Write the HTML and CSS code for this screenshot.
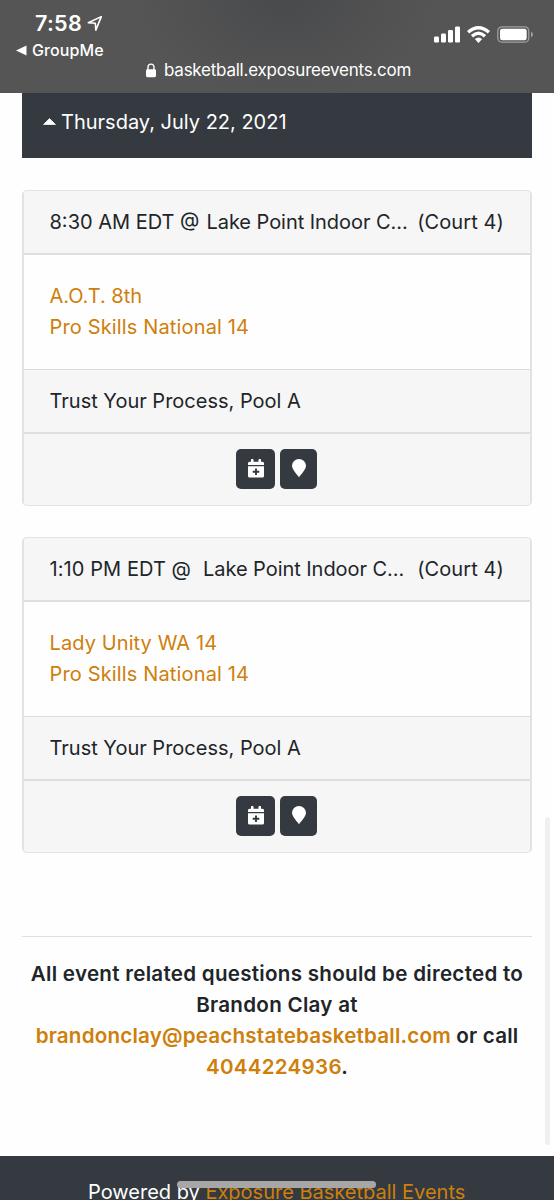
FILE: index.html
```html
<!DOCTYPE html>
<html lang="en">
<head>
<meta charset="utf-8">
<title>Schedule</title>
<link rel="stylesheet" href="styles.css">
</head>
<body>
<div class="screen">
  <header class="browser-bar">
    <div class="status">
      <div class="status-left">
        <div class="clock"><span class="time">7:58</span>
          <svg class="location" width="16" height="17" viewBox="0 0 16 17"><path d="M1.3 7.7 14.3 1.6 8.8 15.1 8.3 8.2Z" fill="none" stroke="#fff" stroke-width="1.6" stroke-linejoin="round"/></svg>
        </div>
        <div class="back"><svg width="11" height="11" viewBox="0 0 11 11"><path d="M0 5.5 10.5 0.5V10.5Z" fill="#fff"/></svg><span class="back-text">GroupMe</span></div>
      </div>
      <div class="status-right">
        <svg width="26" height="17" viewBox="0 0 26 17" fill="#fff"><rect x="0" y="10.5" width="5" height="6" rx="1.2"/><rect x="7" y="7.5" width="5" height="9" rx="1.2"/><rect x="14" y="4" width="5" height="12.5" rx="1.2"/><rect x="21" y="0.5" width="5" height="16" rx="1.2"/></svg>
        <svg class="wifi" width="23" height="17" viewBox="0 0 24 17" preserveAspectRatio="none"><path d="M0 5Q12-5 24 5L21.700 7.600Q12-.8 2.300 7.600Z M4 9Q12 2 20 9L17.600 11.500Q12 6.600 6.400 11.500Z M8.200 13Q12 9.900 15.800 13L12 17Z" fill="#fff"/></svg>
        <svg class="battery" width="37" height="17" viewBox="0 0 37 17"><rect x=".8" y=".8" width="31" height="15.4" rx="4.3" fill="none" stroke="#a0a0a0" stroke-width="1.3"/><rect x="3" y="2.700" width="26.7" height="11.600" rx="2.2" fill="#fff"/><path d="M34 5.7Q36 6.5 36 8.5T34 11.3Z" fill="#a0a0a0"/></svg>
      </div>
    </div>
    <div class="address"><svg width="10" height="15" viewBox="0 0 10 15"><path d="M2 7V4.2a3 3.1 0 0 1 6 0V7" fill="none" stroke="#fff" stroke-width="1.4"/><rect x="0" y="6.2" width="10" height="8" rx="1.4" fill="#fff"/></svg><span class="host">basketball.exposureevents.com</span></div>
  </header>

  <main class="content">
    <h2 class="day"><svg width="13" height="7" viewBox="0 0 13 7"><path d="M.5 6.5 6.5 .5 12.5 6.5Z" fill="#fff" stroke="#fff" stroke-width=".7" stroke-linejoin="round"/></svg><span class="day-text">Thursday, July 22, 2021</span></h2>

    <section class="card">
      <div class="card-row game"><span class="when">8:30 AM EDT @</span><span class="place place-first">Lake Point Indoor C...</span><span class="court">(Court 4)</span></div>
      <div class="teams"><a class="aot">A.O.T. 8th</a><a class="pro">Pro Skills National 14</a></div>
      <div class="card-row division"><span class="pool">Trust Your Process, Pool A</span></div>
      <div class="actions">
        <button class="button calendar" aria-label="Add to calendar"><svg width="16" height="19" viewBox="0 0 16 19"><path d="M0 4.2q0-1.5 1.5-1.5H3V.8q0-.8.8-.8h.9q.8 0 .8.8v1.9h5V.8q0-.8.8-.8h.9q.8 0 .8.8v1.9h1.5Q16 2.700 16 4.200V6H0Z" fill="#fff"/><path d="M0 7.200H16V17q0 1.500-1.500 1.500h-13Q0 18.500 0 17Z" fill="#fff"/><path d="M8 9.400v6.600M4.700 12.700h6.600" stroke="#343a40" stroke-width="1.900"/></svg></button>
        <button class="button pin" aria-label="Map"><svg width="14" height="19" viewBox="0 0 14 19"><path d="M7 18.300C5.500 16.200 0 10.500 0 6.800A7 6.800 0 0 1 14 6.800C14 10.500 8.500 16.200 7 18.300Z" fill="#fff"/></svg></button>
      </div>
    </section>

    <section class="card card-second">
      <div class="card-row game"><span class="when when-second">1:10 PM EDT @</span><span class="place place-second">Lake Point Indoor C...</span><span class="court">(Court 4)</span></div>
      <div class="teams"><a class="lady">Lady Unity WA 14</a><a class="pro">Pro Skills National 14</a></div>
      <div class="card-row division"><span class="pool">Trust Your Process, Pool A</span></div>
      <div class="actions">
        <button class="button calendar" aria-label="Add to calendar"><svg width="16" height="19" viewBox="0 0 16 19"><path d="M0 4.2q0-1.5 1.5-1.5H3V.8q0-.8.8-.8h.9q.8 0 .8.8v1.9h5V.8q0-.8.8-.8h.9q.8 0 .8.8v1.9h1.5Q16 2.700 16 4.200V6H0Z" fill="#fff"/><path d="M0 7.200H16V17q0 1.500-1.500 1.500h-13Q0 18.500 0 17Z" fill="#fff"/><path d="M8 9.400v6.600M4.700 12.700h6.600" stroke="#343a40" stroke-width="1.900"/></svg></button>
        <button class="button pin" aria-label="Map"><svg width="14" height="19" viewBox="0 0 14 19"><path d="M7 18.300C5.500 16.200 0 10.500 0 6.800A7 6.800 0 0 1 14 6.800C14 10.500 8.500 16.200 7 18.300Z" fill="#fff"/></svg></button>
      </div>
    </section>

    <div class="contact">
      <div class="q1">All event related questions should be directed to</div>
      <div class="q2">Brandon Clay at</div>
      <div class="q3"><a>brandonclay@peachstatebasketball.com</a> or call</div>
      <div class="q4"><a>4044224936</a>.</div>
    </div>
  </main>

  <footer class="footer"><span class="powered">Powered by <a>Exposure Basketball Events</a></span></footer>
  <div class="scrollbar"></div>
  <div class="home-indicator"></div>
</div>
</body>
</html>
```

FILE: styles.css
```css
* { box-sizing: border-box; }
body { margin: 0; background: #fefefe; color: #212529; font-family: Inter, "Liberation Sans", sans-serif; font-size: 20px; line-height: 31px; }
svg { display: block; flex: none; }
a { color: #ce7f0c; text-decoration: none; }
.screen { position: relative; height: 1200px; overflow: hidden; display: flex; flex-direction: column; white-space: nowrap; }
.browser-bar { height: 93px; flex: none; color: #fff; background: radial-gradient(ellipse 150px 100px at 285px 0, #494a4c, #555 100%); }
.status { height: 60px; display: flex; justify-content: space-between; }
.status-left { padding: 11px 0 0 16px; }
.clock { display: flex; align-items: center; gap: 6px; height: 25px; padding-left: 19px; }
.time { font-size: 21.5px; font-weight: 600; letter-spacing: .3px; }
.location { margin-left: -1px; }
.back { display: flex; align-items: center; gap: 6px; height: 28px; font-size: 16px; font-weight: 500; letter-spacing: .1px; }
.back-text { margin-left: -1px; }
.status-right { display: flex; align-items: flex-start; padding: 25.5px 20px 0 0; }
.wifi { margin: 0 0 0 7px; }
.battery { margin-left: 7px; }
.address { height: 20px; display: flex; align-items: center; gap: 8px; padding-left: 146px; font-size: 17px; letter-spacing: -.24px; }
.content { flex: none; height: 1063px; padding: 0 22px; }
.day { height: 65px; margin: 0 0 32px; padding: 14px 21px 0; display: flex; align-items: flex-start; gap: 5px; background: #343a40; color: #fff; font-size: 20px; font-weight: 400; }
.day svg { margin-top: 11px; }
.card { height: 316px; margin-bottom: 31px; border: solid #e2e2e2; border-width: 1px 2px; border-radius: 5px; background: #fefefe; overflow: hidden; }
.card-row { display: flex; align-items: center; padding: 0 26px; background: #f6f6f6; }
.game { height: 64px; padding-left: 25.5px; border-bottom: 2px solid #dfdfdf; }
.card-second .game { padding-top: 1px; }
.court { margin-left: auto; letter-spacing: .1px; }
.place { letter-spacing: -.05px; }
.place-first { margin-left: 7px; }
.place-second { margin-left: 12px; }
.when-second { letter-spacing: .08px; }
.teams { height: 114px; padding: 26px 26px 0 25.5px; display: flex; flex-direction: column; align-items: flex-start; }
.pro { letter-spacing: .15px; }
.lady { letter-spacing: .1px; }
.division { height: 65px; padding-left: 25.5px; border-top: 1px solid #dcdcdc; border-bottom: 2px solid #dfdfdf; }
.actions { height: 71px; background: #f6f6f6; display: flex; justify-content: center; gap: 5px; padding: 15px 1px 0 0; }
.button { height: 40px; border: 0; border-radius: 5px; padding: 10px 0 0; background: #343a40; display: flex; justify-content: center; align-items: flex-start; }
.calendar { width: 39px; }
.pin { width: 37px; }
.contact { margin-top: 83px; border-top: 1px solid #dedfdf; padding-top: 21px; text-align: center; font-size: 20.6px; font-weight: 600; letter-spacing: .27px; }
.q3 { letter-spacing: .19px; }
.footer { flex: none; height: 44px; padding: 21px 0 0 88px; background: #343a40; color: #fff; }
.scrollbar { position: absolute; left: 545px; top: 817px; width: 5px; height: 328px; border-radius: 3px; background: #f0f0f0; }
.home-indicator { position: absolute; left: 177px; top: 1181px; width: 199px; height: 7px; border-radius: 4px; background: #a7a7a7; }
```
